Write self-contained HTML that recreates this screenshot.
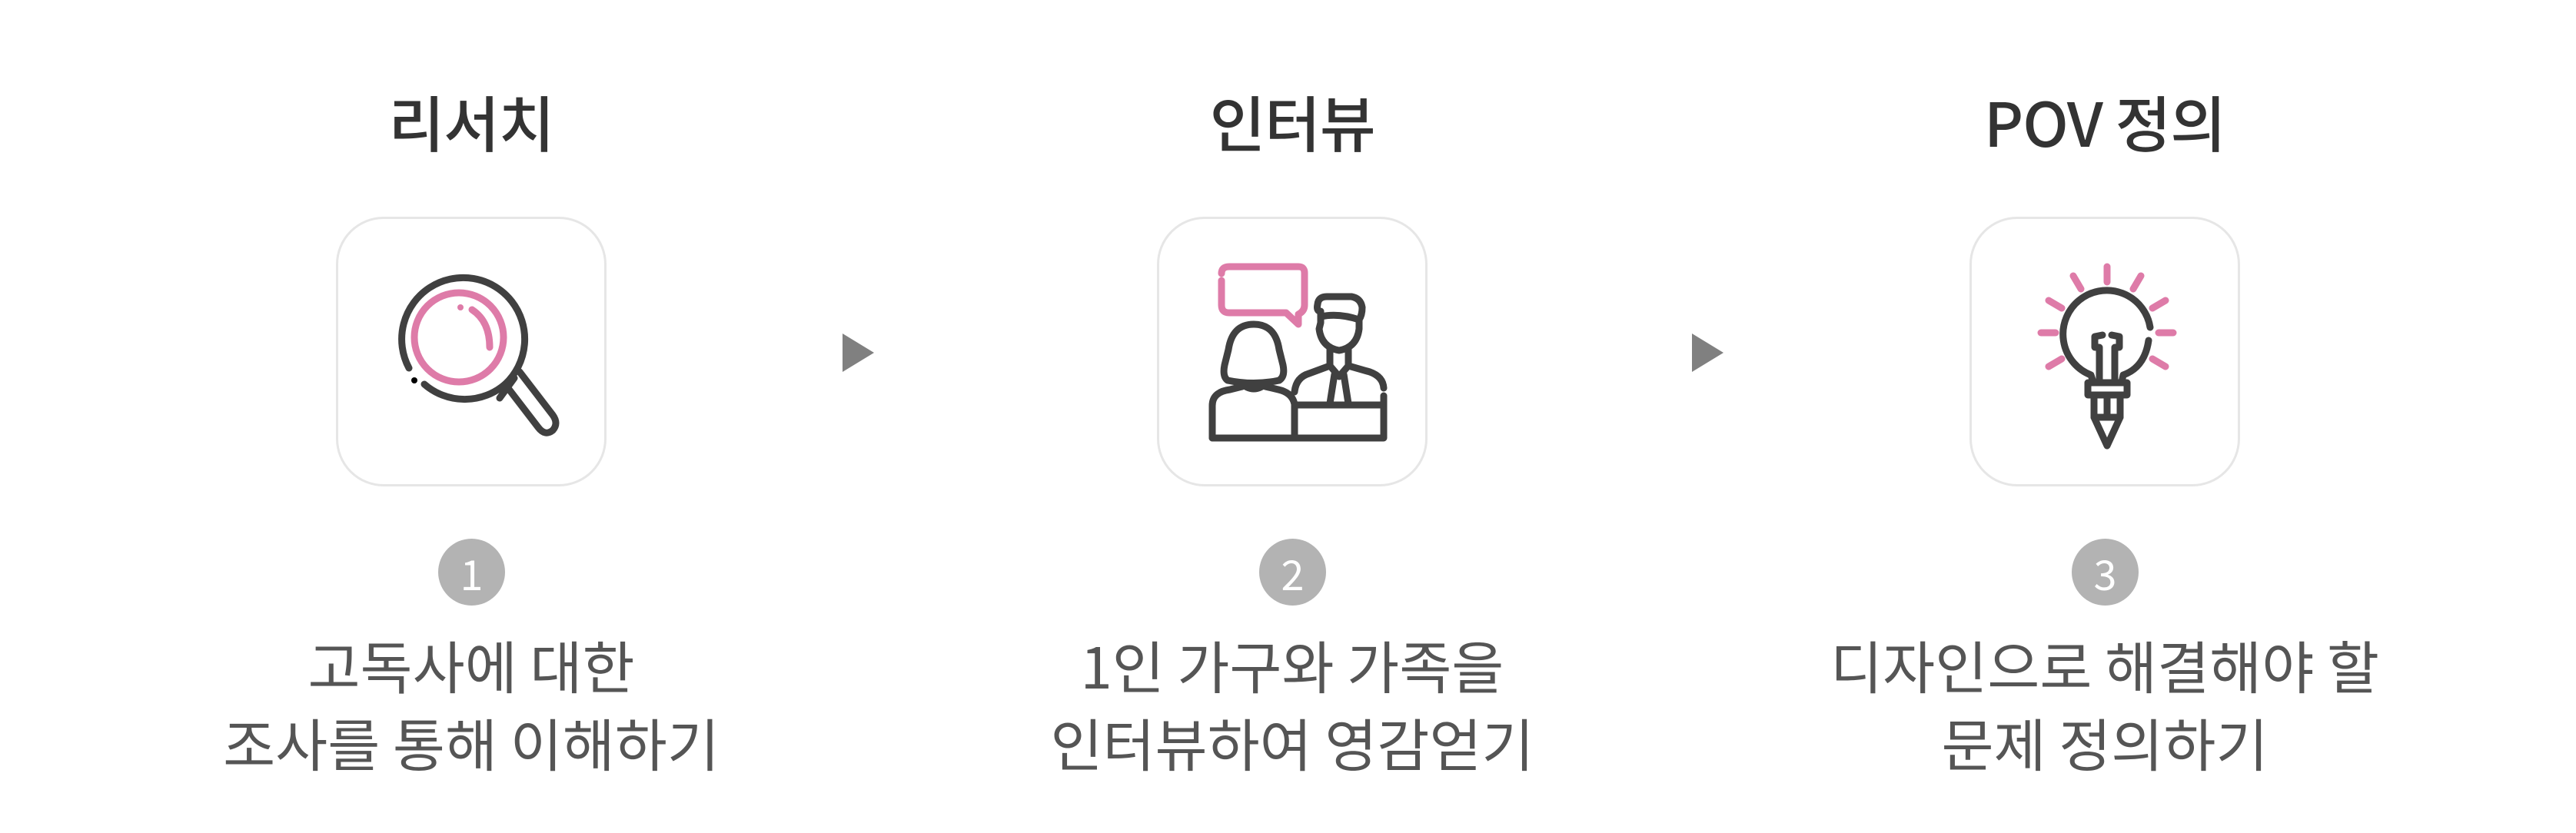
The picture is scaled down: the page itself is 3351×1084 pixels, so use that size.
<!DOCTYPE html>
<html><head><meta charset="utf-8"><style>
html,body{margin:0;padding:0;background:#fff;}
body{width:3351px;height:1084px;position:relative;overflow:hidden;font-family:"Liberation Sans","Noto Sans CJK KR",sans-serif;}
.t{position:absolute;width:800px;text-align:center;color:#333;font-size:79px;font-weight:500;line-height:80px;top:117px;font-family:"Noto Sans CJK KR",sans-serif;letter-spacing:-1px}
.box{position:absolute;top:282px;width:352px;height:351px;border:3px solid #e6e6e6;border-radius:62px;box-sizing:border-box;}
.n{position:absolute;top:701px;width:87px;height:87px;border-radius:50%;background:#b3b3b3;color:#fff;font-size:54px;line-height:87px;text-align:center;font-family:"Noto Sans CJK KR",sans-serif;}
.d{position:absolute;width:900px;text-align:center;color:#555;font-size:74px;line-height:101px;top:814px;font-family:"Noto Sans CJK KR",sans-serif;}
.a{position:absolute;top:434px;width:0;height:0;border-top:25px solid transparent;border-bottom:25px solid transparent;border-left:41px solid #808080;}
</style></head><body>
<div class="t" style="left:213px">리서치</div>
<div class="t" style="left:1281px">인터뷰</div>
<div class="t" style="left:2338px">POV 정의</div>
<div class="box" style="left:437px"></div>
<div class="box" style="left:1505px"></div>
<div class="box" style="left:2562px"></div>
<div class="a" style="left:1096px"></div>
<div class="a" style="left:2201px"></div>
<div class="n" style="left:570px">1</div>
<div class="n" style="left:1638px">2</div>
<div class="n" style="left:2695px">3</div>
<div class="d" style="left:163px">고독사에 대한<br>조사를 통해 이해하기</div>
<div class="d" style="left:1231px">1인 가구와 가족을<br>인터뷰하여 영감얻기</div>
<div class="d" style="left:2288px">디자인으로 해결해야 할<br>문제 정의하기</div>
<svg width="3351" height="1084" style="position:absolute;left:0;top:0" fill="none" stroke-linecap="round" stroke-linejoin="round">
<!-- magnifier -->
<g stroke="#404040" stroke-width="9">
<path d="M532 479 A80 80 0 1 1 657 500 A80 80 0 0 1 552 500"/>
<path d="M657 500 L700 556 Q709 568 719 560 Q727 551 719 540 L676 484"/>
<path d="M650 518 L669 492"/>
</g>
<circle cx="539" cy="495" r="4" fill="#000"/>
<g stroke="#de7ba8" stroke-width="9">
<circle cx="597" cy="439" r="58"/>
<path d="M614 403 Q637 418 637 452"/>
</g>
<circle cx="599" cy="400" r="4" fill="#de7ba8"/>
<!-- interview -->
<g stroke="#de7ba8" stroke-width="9">
<path d="M1589 365 L1589 397 Q1589 407 1599 407 L1673 407 L1689 422 L1689 409 Q1697 405 1697 397 L1697 355 Q1697 347 1689 347 L1599 347 Q1589 347 1589 356"/>
</g>
<g stroke="#404040" stroke-width="9">
<path d="M1597 495 Q1590 490 1593 475 L1598 455 Q1603 422 1631 422 Q1659 422 1664 455 L1669 475 Q1672 490 1664 495 Q1631 502 1597 495 Z"/>
<path d="M1616 500 Q1631 512 1646 500"/>
<path d="M1577 570 L1577 528 Q1577 510 1600 507 L1616 503 M1646 503 L1663 507 Q1681 511 1684 526 L1684 570"/>
<path d="M1577 570 L1800 570 L1800 515"/>
<path d="M1684 527 L1799 527"/>
<path d="M1684 510 Q1686 491 1703 486 L1730 476 M1754 476 L1782 484 Q1799 490 1800 505"/>
<path d="M1730 452 L1730 476 L1742 490 L1754 476 L1754 452"/>
<path d="M1736 487 L1730 525 M1748 487 L1754 525"/>
<path d="M1718 420 L1718 405 Q1712 405 1714 396 Q1715 386 1726 386 L1758 386 Q1770 388 1772 400 Q1772 410 1768 416 L1768 428 Q1765 452 1742 456 Q1719 452 1716 428 Z"/>
<path d="M1718 412 Q1741 407 1768 416"/>
</g>
<!-- lightbulb -->
<g stroke="#de7ba8" stroke-width="9">
<path d="M2741 347 L2741 367"/>
<path d="M2697 359 L2707 376"/><path d="M2785 359 L2775 376"/>
<path d="M2665 391 L2682 401"/><path d="M2817 391 L2800 401"/>
<path d="M2655 433 L2674 433"/><path d="M2827 433 L2808 433"/>
<path d="M2665 477 L2682 467"/><path d="M2817 477 L2800 467"/>
</g>
<g stroke="#404040" stroke-width="9">
<path d="M2797 426 A57 57 0 1 0 2720 488 L2723 497"/>
<path d="M2795 443 Q2790 478 2762 488 L2760 497"/>
<path d="M2716 498 L2767 498 L2767 514 L2716 514 Z"/>
<path d="M2731 497 L2731 452 L2725 452 L2725 438 L2735 436 M2751 497 L2751 452 L2757 452 L2757 438 L2747 436"/>
<path d="M2724 515 L2724 543 L2741 580 L2758 543 L2758 515"/>
<path d="M2741 515 L2741 543 M2724 543 L2758 543"/>
</g>
</svg>
</body></html>
